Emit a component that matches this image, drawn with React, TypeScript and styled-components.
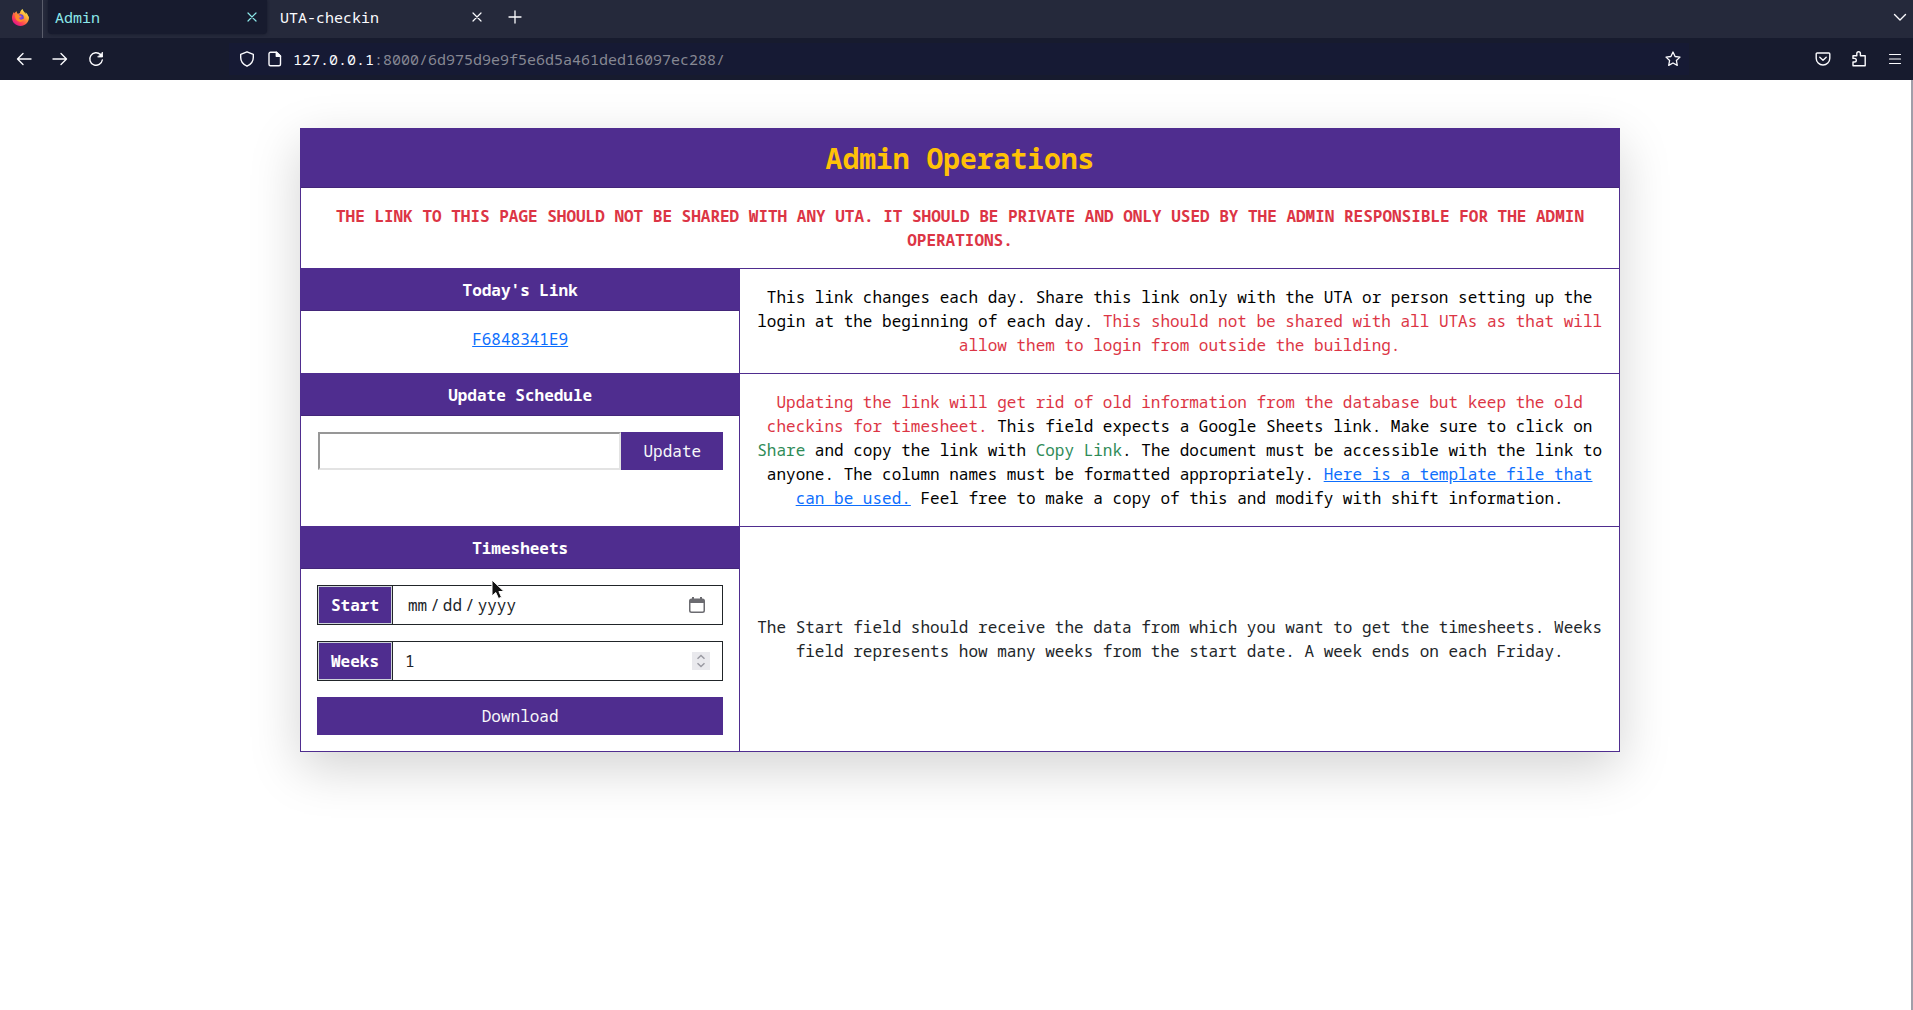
import React from "react";
import styled, { createGlobalStyle, css } from "styled-components";

const mono = `"Noto Sans Mono", "DejaVu Sans Mono", "Liberation Mono", monospace`;
const purple = "#4f2d8f";

const GlobalStyle = createGlobalStyle`
  *, *::before, *::after { box-sizing: border-box; }
  body {
    margin: 0;
    background: #fff;
    color: #212529;
    font: 16px/24px ${mono};
  }
  #root { display: flex; flex-direction: column; min-height: 100vh; }
  button, input { font: inherit; color: inherit; border-radius: 0; margin: 0; }
`;

/* ---------- browser chrome ---------- */

const TabStrip = styled.header`
  display: flex;
  height: 38px;
  background: #25293b;
  color: #fbfbfe;
  font-size: 15px;
`;

const AppMark = styled.div`
  display: flex;
  align-items: center;
  width: 43px;
  height: 38px;
  padding: 0 0 4px 12px;
  border-right: 1px solid #5a5d6b;
  margin-right: 5px;
`;

const Tab = styled.div<{ $active?: boolean }>`
  display: flex;
  align-items: center;
  justify-content: space-between;
  width: ${(p) => (p.$active ? 219 : 225)}px;
  height: 34px;
  padding: 0 7px 0 ${(p) => (p.$active ? 7 : 13)}px;
  border-radius: 0 0 4px 4px;
  ${(p) =>
    p.$active &&
    css`
      background: #171b2e;
      color: #8ce8ea;
      box-shadow: 0 0 3px #141728;
    `}
`;

const IconButton = styled.button<{ $size?: number }>`
  display: flex;
  align-items: center;
  justify-content: center;
  width: ${(p) => p.$size ?? 36}px;
  height: ${(p) => p.$size ?? 36}px;
  padding: 0;
  border: 0;
  background: none;
`;

const NewTab = styled.div`
  display: flex;
  height: 34px;
  align-items: center;
  margin-left: 5px;
`;

const TabMenu = styled.div`
  display: flex;
  align-items: center;
  height: 34px;
  margin-left: auto;
  padding-right: 1px;
`;

const NavBar = styled.nav`
  display: flex;
  align-items: center;
  height: 42px;
  padding-left: 6px;
  background: #171b2e;
  color: #fbfbfe;
  font-size: 15px;
`;

const Address = styled.div`
  display: flex;
  align-items: center;
  flex: 1;
  height: 32px;
  margin: 0 116px 0 115px;
  padding-left: 4px;
  background: #161a34;
`;

const AddressText = styled.span`
  flex: 1;
  margin-left: 4px;
  color: #868893;
`;

const Host = styled.span`
  color: #fbfbfe;
`;

/* ---------- page ---------- */

const Main = styled.main`
  position: relative;
  flex: 1;
  padding: 48px 0 48px 9px;
  border-right: 2px solid #a09ea9;
`;

const Panel = styled.section`
  display: grid;
  grid-template-columns: 1fr 2fr;
  width: 100%;
  max-width: 1320px;
  margin: 0 auto;
  border: 1px solid ${purple};
  background: #fff;
  box-shadow: 0 16px 48px rgba(0, 0, 0, 0.175);
`;

const Title = styled.h1`
  grid-column: 1 / -1;
  margin: 0;
  padding: 13px 0 12px;
  background: ${purple};
  border-bottom: 1px solid #432679;
  color: #ffc107;
  font-size: 28px;
  line-height: 33px;
  text-align: center;
`;

const Warning = styled.p`
  grid-column: 1 / -1;
  margin: 0;
  padding: 16px;
  color: #dc3545;
  font-weight: 700;
  text-align: center;
`;

const Operation = styled.div`
  border-top: 1px solid ${purple};
  border-right: 1px solid ${purple};
`;

const OperationTitle = styled.h2`
  margin: 0;
  padding: 9px 0 8px;
  background: ${purple};
  border-bottom: 1px solid #432679;
  color: #fff;
  font-size: 16px;
  line-height: 24px;
  text-align: center;
`;

const OperationBody = styled.div`
  padding: 16px;
  text-align: center;
`;

const Note = styled.div<{ $soft?: boolean }>`
  display: flex;
  align-items: center;
  padding: 16px 14px;
  border-top: 1px solid ${purple};
  color: ${(p) => (p.$soft ? "#212529" : "#000")};
  text-align: center;
`;

const NoteText = styled.p`
  flex: 1;
  margin: 0;
`;

const Danger = styled.span`
  color: #dc3545;
`;

const Success = styled.span`
  color: #2e8b57;
`;

const Link = styled.a`
  color: #0d6efd;
`;

const UpdateForm = styled.form`
  display: flex;
  padding-left: 1px;
`;

const UrlInput = styled.input`
  flex: 1;
  min-width: 0;
  height: 38px;
  border: 2px solid;
  border-color: #979797 #e3e3e3 #e3e3e3 #979797;
  background: #fff;
`;

const ActionButton = styled.button<{ $wide?: boolean }>`
  width: ${(p) => (p.$wide ? "100%" : "102px")};
  height: 38px;
  padding: 0;
  border: 0;
  background: ${purple};
  color: #f8f9fa;
`;

const TimesheetForm = styled.form`
  display: grid;
  gap: 16px;
`;

const Field = styled.div`
  display: flex;
  align-items: center;
  height: 40px;
  border: 1px solid #212529;
`;

const FieldLabel = styled.label`
  display: flex;
  align-items: center;
  justify-content: center;
  width: 74px;
  height: 38px;
  border: 1px solid #ced4da;
  background: ${purple};
  color: #fff;
  font-weight: 700;
`;

const fieldInput = css`
  flex: 1;
  min-width: 0;
  height: 38px;
  border: 0;
  border-left: 1px solid #212529;
  background: transparent;
  outline: 0;
`;

const DateInput = styled.input`
  ${fieldInput}
  padding: 0 0 0 15px;
  &::-webkit-calendar-picker-indicator { display: none; }
  &::-webkit-datetime-edit { padding: 0; }
  &::-webkit-datetime-edit-text { padding: 0 3px; }
  &::-webkit-datetime-edit-fields-wrapper { padding: 0; }
  &::-webkit-datetime-edit-month-field,
  &::-webkit-datetime-edit-day-field,
  &::-webkit-datetime-edit-year-field { padding: 0; }
`;

const NumberInput = styled.input`
  ${fieldInput}
  padding: 0 0 0 12px;
  appearance: textfield;
  &::-webkit-inner-spin-button { appearance: none; margin: 0; }
`;

const FieldIcon = styled.span<{ $spin?: boolean }>`
  display: flex;
  margin-right: ${(p) => (p.$spin ? 12 : 17)}px;
  background: ${(p) => (p.$spin ? "#e9e9ed" : "none")};
`;

const Pointer = styled.svg`
  position: absolute;
  left: 491px;
  top: 499px;
`;

/* ---------- icons ---------- */

const Icon = ({ size = 16, children, w = 1.4 }: { size?: number; w?: number; children: React.ReactNode }) => (
  <svg width={size} height={size} viewBox="0 0 16 16" fill="none" stroke="currentColor" strokeWidth={w} strokeLinecap="round" strokeLinejoin="round" aria-hidden="true">
    {children}
  </svg>
);

const CloseIcon = () => (
  <Icon w={1.2}>
    <path d="M4 4l8 8M12 4l-8 8" />
  </Icon>
);

const FoxIcon = () => (
  <svg width="17" height="17" viewBox="0 0 32 32" aria-hidden="true">
    <defs>
      <linearGradient id="flame" x1="0.85" y1="0.1" x2="0.2" y2="0.9">
        <stop offset="0" stopColor="#fff44f" />
        <stop offset="0.35" stopColor="#ffa436" />
        <stop offset="0.7" stopColor="#ff4a4f" />
        <stop offset="1" stopColor="#e31587" />
      </linearGradient>
      <radialGradient id="globe">
        <stop offset="0" stopColor="#a04be0" />
        <stop offset="1" stopColor="#5b3fd0" />
      </radialGradient>
    </defs>
    <path fill="url(#flame)" d="M30 12c-1-3-3-5-5-6 1 2 2 4 2 5-2-5-6-6-7-11-4 2-5 6-5 8-2 0-3 1-4 1C9 8 9 5 9 4 7 5 6 6 5 8 4 8 4 6 4 5 1 9 0 13 0 17c0 8 7 15 16 15s16-7 16-16c0-1-1-3-2-4z" />
    <circle cx="16" cy="16" r="6" fill="url(#globe)" />
    <path fill="#ff8a2b" d="M6 11c3-2 6-1 8 1l4 1c0 2-3 2-4 3s0 4 3 4c2 0 4-2 6-1-1 4-5 6-9 5-6-1-9-7-8-13z" />
  </svg>
);

export default function App() {
  return (
    <>
      <GlobalStyle />
      <TabStrip>
        <AppMark>
          <FoxIcon />
        </AppMark>
        <Tab $active>
          <span>Admin</span>
          <IconButton $size={16} aria-label="Close Admin"><CloseIcon /></IconButton>
        </Tab>
        <Tab>
          <span>UTA-checkin</span>
          <IconButton $size={16} aria-label="Close UTA-checkin"><CloseIcon /></IconButton>
        </Tab>
        <NewTab>
          <IconButton aria-label="New tab">
            <Icon w={1.3}><path d="M8 2v12M2 8h12" /></Icon>
          </IconButton>
        </NewTab>
        <TabMenu>
          <IconButton $size={24} aria-label="List all tabs">
            <Icon><path d="M2.500 5.500L8 11l5.500-5.500" /></Icon>
          </IconButton>
        </TabMenu>
      </TabStrip>

      <NavBar>
        <IconButton aria-label="Back"><Icon><path d="M15 8H2M7 2.500L1.500 8 7 13.500" /></Icon></IconButton>
        <IconButton aria-label="Forward"><Icon><path d="M1 8h13M9 2.500L14.500 8 9 13.500" /></Icon></IconButton>
        <IconButton aria-label="Reload">
          <Icon>
            <path d="M14.300 9A6.300 6.300 0 1 1 12.500 3.500L14 5" />
            <path d="M14.500 1.500v4.500H10z" fill="currentColor" strokeWidth="0.800" />
          </Icon>
        </IconButton>
        <Address>
          <IconButton $size={28} aria-label="Tracking protection">
            <Icon><path d="M8 .8l6.300 2.500v3.200c0 4-2.500 7-6.300 8.700C4.200 13.500 1.700 10.500 1.700 6.500V3.300z" /></Icon>
          </IconButton>
          <IconButton $size={28} aria-label="Site information">
            <Icon>
              <path d="M3.500 1.200H9.500L13.500 5v8.300a1.500 1.500 0 0 1-1.500 1.500H3.500A1.500 1.500 0 0 1 2 13.300V2.700a1.500 1.500 0 0 1 1.500-1.500z" />
              <path d="M9.300 1.200V5.200h4.200z" fill="currentColor" />
            </Icon>
          </IconButton>
          <AddressText>
            <Host>127.0.0.1</Host>:8000/6d975d9e9f5e6d5a461ded16097ec288/
          </AddressText>
          <IconButton $size={32} aria-label="Bookmark this page">
            <Icon w={1.3}><path d="M8 1l2.100 4.500 4.900.6-3.600 3.400.9 4.900L8 12l-4.300 2.400.9-4.900L1 6.100l4.900-.6z" /></Icon>
          </IconButton>
        </Address>
        <IconButton aria-label="Save to Pocket">
          <Icon>
            <path d="M2.200 2h11.600A1 1 0 0 1 14.800 3v4.200a6.800 6.800 0 0 1-13.600 0V3a1 1 0 0 1 1-1z" />
            <path d="M4.800 6.300L8 9.300l3.200-3" />
          </Icon>
        </IconButton>
        <IconButton aria-label="Extensions">
          <Icon><path d="M2 14.800V11h1.500a1.600 1.600 0 0 0 0-3.600H2V4.800h3.800V2.600a1.800 1.800 0 0 1 3.600 0v2.200h4.800v10z" /></Icon>
        </IconButton>
        <IconButton aria-label="Open application menu">
          <Icon w={1.2}><path d="M2.500 3.500h11M2.500 8h11M2.500 12.500h11" /></Icon>
        </IconButton>
      </NavBar>

      <Main>
        <Panel>
          <Title>Admin Operations</Title>
          <Warning>
            THE LINK TO THIS PAGE SHOULD NOT BE SHARED WITH ANY UTA. IT SHOULD BE PRIVATE AND ONLY USED BY THE ADMIN RESPONSIBLE FOR THE ADMIN OPERATIONS.
          </Warning>

          <Operation>
            <OperationTitle>Today's Link</OperationTitle>
            <OperationBody><Link href="#today">F6848341E9</Link></OperationBody>
          </Operation>
          <Note>
            <NoteText>
              This link changes each day. Share this link only with the UTA or person setting up the login at the beginning of each day.{" "}
              <Danger>This should not be shared with all UTAs as that will allow them to login from outside the building.</Danger>
            </NoteText>
          </Note>

          <Operation>
            <OperationTitle>Update Schedule</OperationTitle>
            <OperationBody>
              <UpdateForm>
                <UrlInput type="text" aria-label="Google Sheets link" />
                <ActionButton type="button">Update</ActionButton>
              </UpdateForm>
            </OperationBody>
          </Operation>
          <Note>
            <NoteText>
              <Danger>Updating the link will get rid of old information from the database but keep the old checkins for timesheet.</Danger>{" "}
              This field expects a Google Sheets link. Make sure to click on <Success>Share</Success> and copy the link with{" "}
              <Success>Copy Link</Success>. The document must be accessible with the link to anyone. The column names must be formatted appropriately.{" "}
              <Link href="#template">Here is a template file that can be used.</Link> Feel free to make a copy of this and modify with shift information.
            </NoteText>
          </Note>

          <Operation>
            <OperationTitle>Timesheets</OperationTitle>
            <OperationBody>
              <TimesheetForm>
                <Field>
                  <FieldLabel htmlFor="start">Start</FieldLabel>
                  <DateInput id="start" type="date" />
                  <FieldIcon>
                    <svg width="16" height="16" viewBox="0 0 16 16" aria-hidden="true">
                      <path fill="#6b6b70" fillRule="evenodd" d="M3 0h2v1.500h6V0h2v1.500h.5A2.500 2.500 0 0 1 16 4v9.500a2.500 2.500 0 0 1-2.500 2.500h-11A2.500 2.500 0 0 1 0 13.500V4a2.500 2.500 0 0 1 2.500-2.500H3zM1.500 6v7.500a1 1 0 0 0 1 1h11a1 1 0 0 0 1-1V6z" />
                    </svg>
                  </FieldIcon>
                </Field>
                <Field>
                  <FieldLabel htmlFor="weeks">Weeks</FieldLabel>
                  <NumberInput id="weeks" type="number" defaultValue={1} />
                  <FieldIcon $spin>
                    <svg width="18" height="18" viewBox="0 0 18 18" fill="none" stroke="#9a9aa2" strokeWidth="1.500" aria-hidden="true">
                      <path d="M5.500 6.700L9 3.500l3.500 3.200M5.500 11.300L9 14.500l3.500-3.200" />
                    </svg>
                  </FieldIcon>
                </Field>
                <ActionButton type="button" $wide>Download</ActionButton>
              </TimesheetForm>
            </OperationBody>
          </Operation>
          <Note $soft>
            <NoteText>
              The Start field should receive the data from which you want to get the timesheets. Weeks field represents how many weeks from the start date. A week ends on each Friday.
            </NoteText>
          </Note>
        </Panel>
        <Pointer width="14" height="22" viewBox="0 0 14 22" aria-hidden="true">
          <path d="M1 1v16l3.800-3.500L7.500 19.500l3-1.300-2.600-5.700H13z" fill="#111" stroke="#fff" strokeWidth="1" />
        </Pointer>
      </Main>
    </>
  );
}
